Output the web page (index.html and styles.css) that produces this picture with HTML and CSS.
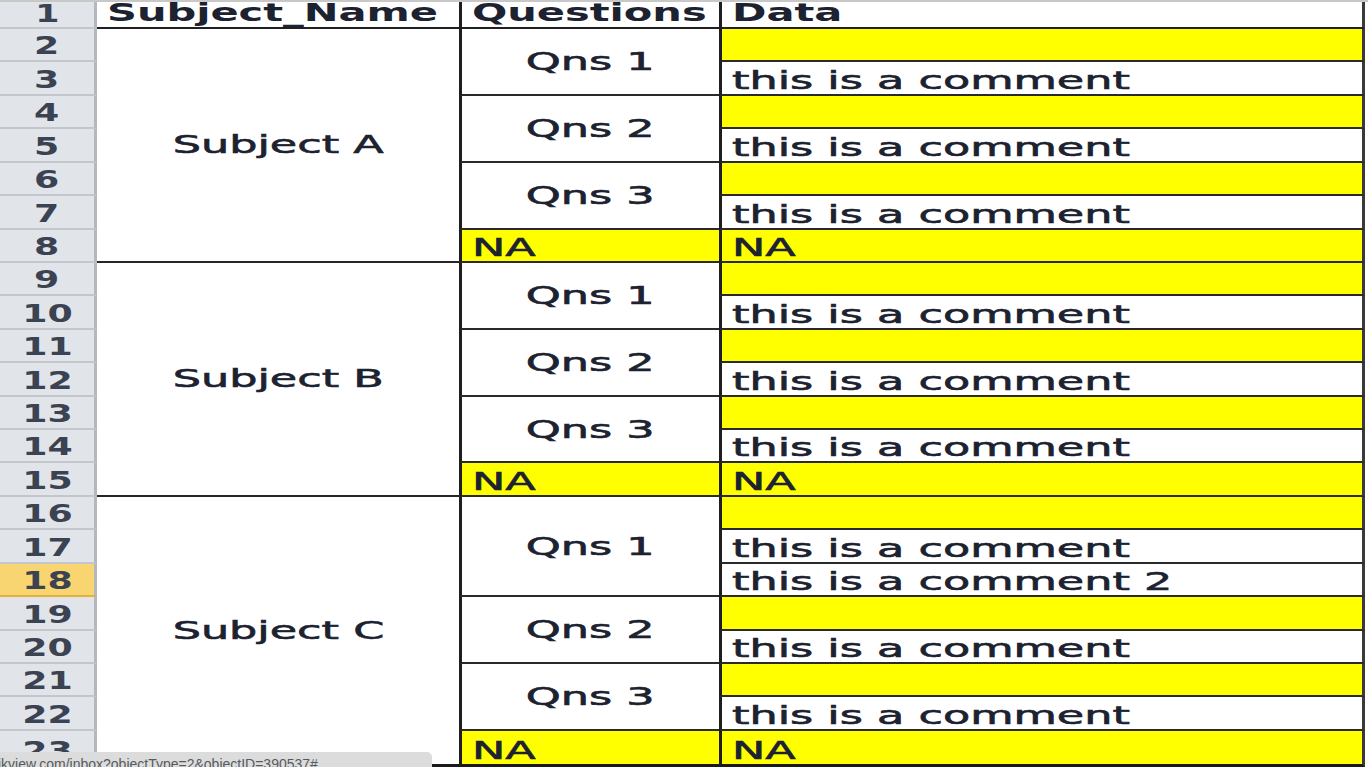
FILE: index.html
```html
<!DOCTYPE html>
<html>
<head>
<meta charset="utf-8">
<link rel="stylesheet" href="styles.css">
</head>
<body>
<div class="sheet">
  <div class="rh"><span class="n">1</span></div>
  <div class="hd c2"><span class="t">Subject_Name</span></div>
  <div class="hd c3 ql"><span class="t">Questions</span></div>
  <div class="hd c4 dl"><span class="t">Data</span></div>

  <div class="rh"><span class="n">2</span></div>
  <div class="subj s7"><span class="t">Subject A</span></div>
  <div class="q s2"><span class="t">Qns 1</span></div>
  <div class="d y"></div>
  <div class="rh"><span class="n">3</span></div>
  <div class="d"><span class="t">this is a comment</span></div>
  <div class="rh"><span class="n">4</span></div>
  <div class="q s2"><span class="t">Qns 2</span></div>
  <div class="d y"></div>
  <div class="rh"><span class="n">5</span></div>
  <div class="d"><span class="t">this is a comment</span></div>
  <div class="rh"><span class="n">6</span></div>
  <div class="q s2"><span class="t">Qns 3</span></div>
  <div class="d y"></div>
  <div class="rh"><span class="n">7</span></div>
  <div class="d"><span class="t">this is a comment</span></div>
  <div class="rh"><span class="n">8</span></div>
  <div class="q na"><span class="t">NA</span></div>
  <div class="d y"><span class="t">NA</span></div>

  <div class="rh"><span class="n">9</span></div>
  <div class="subj s7"><span class="t">Subject B</span></div>
  <div class="q s2"><span class="t">Qns 1</span></div>
  <div class="d y"></div>
  <div class="rh"><span class="n">10</span></div>
  <div class="d"><span class="t">this is a comment</span></div>
  <div class="rh"><span class="n">11</span></div>
  <div class="q s2"><span class="t">Qns 2</span></div>
  <div class="d y"></div>
  <div class="rh"><span class="n">12</span></div>
  <div class="d"><span class="t">this is a comment</span></div>
  <div class="rh"><span class="n">13</span></div>
  <div class="q s2"><span class="t">Qns 3</span></div>
  <div class="d y"></div>
  <div class="rh"><span class="n">14</span></div>
  <div class="d"><span class="t">this is a comment</span></div>
  <div class="rh"><span class="n">15</span></div>
  <div class="q na"><span class="t">NA</span></div>
  <div class="d y"><span class="t">NA</span></div>

  <div class="rh"><span class="n">16</span></div>
  <div class="subj s8 last"><span class="t">Subject C</span></div>
  <div class="q s3"><span class="t">Qns 1</span></div>
  <div class="d y"></div>
  <div class="rh"><span class="n">17</span></div>
  <div class="d"><span class="t">this is a comment</span></div>
  <div class="rh sel"><span class="n">18</span></div>
  <div class="d"><span class="t">this is a comment 2</span></div>
  <div class="rh"><span class="n">19</span></div>
  <div class="q s2"><span class="t">Qns 2</span></div>
  <div class="d y"></div>
  <div class="rh"><span class="n">20</span></div>
  <div class="d"><span class="t">this is a comment</span></div>
  <div class="rh"><span class="n">21</span></div>
  <div class="q s2"><span class="t">Qns 3</span></div>
  <div class="d y"></div>
  <div class="rh"><span class="n">22</span></div>
  <div class="d"><span class="t">this is a comment</span></div>
  <div class="rh"><span class="n">23</span></div>
  <div class="q na last"><span class="t">NA</span></div>
  <div class="d y last"><span class="t">NA</span></div>
</div>
<div class="status">ikview.com/inbox?objectType=2&amp;objectID=390537#</div>
</body>
</html>
```

FILE: styles.css
```css
html, body {
  margin: 0;
  padding: 0;
  background: #ffffff;
}
body {
  width: 1368px;
  height: 767px;
  overflow: hidden;
  position: relative;
  font-family: "DejaVu Sans", Verdana, sans-serif;
  color: #1c2230;
}
.sheet {
  display: grid;
  grid-template-columns: 97px 362px 260px 646px 3px;
  grid-template-rows: 27px repeat(21, 33.43px) 36px;
  border-top: 2px solid #c8c8c8;
}
.sheet > div {
  box-sizing: border-box;
  display: flex;
  min-width: 0;
}
.t {
  display: inline-block;
  font-size: 25px;
  line-height: 1;
  white-space: nowrap;
  transform: scaleX(1.78);
  transform-origin: left bottom;
  -webkit-text-stroke: 0.6px #1c2230;
}
.rh {
  grid-column: 1;
  background: #e1e4e9;
  border-right: 3px solid #b3b8bf;
  border-bottom: 2px solid #c3c7cd;
  justify-content: center;
  align-items: flex-end;
}
.rh .n {
  display: inline-block;
  font-size: 25px;
  font-weight: bold;
  line-height: 1;
  color: #3b4252;
  transform: scaleX(1.45);
  padding-bottom: 2px;
}
.rh:first-child .n {
  font-size: 24px;
  line-height: 22px;
  padding-bottom: 2px;
}
.rh.sel {
  background: #f8d570;
  border-bottom-color: #e2b23f;
}
.hd {
  align-items: flex-end;
  padding-left: 10px;
  padding-bottom: 2px;
  border-bottom: 2px solid #202020;
  position: relative;
  z-index: 1;
}
.hd .t {
  font-weight: bold;
  font-size: 24px;
  transform: scaleX(1.73);
  -webkit-text-stroke: 0;
}
.c2 { grid-column: 2; }
.c3 { grid-column: 3; }
.c4 { grid-column: 4; }
.ql {
  border-left: 3px solid #1e1e1e;
}
.dl {
  border-left: 3px solid #1e1e1e;
  border-right: 3px solid #3a3a3a;
  padding-left: 10px;
}
.subj {
  grid-column: 2;
  justify-content: center;
  align-items: center;
  border-bottom: 2px solid #262626;
}
.subj .t, .q .t {
  transform-origin: center center;
}
.subj.last { border-bottom: 3px solid #1a1a1a; }
.s2 { grid-row: span 2; }
.s3 { grid-row: span 3; }
.s7 { grid-row: span 7; }
.s8 { grid-row: span 8; }
.q {
  grid-column: 3;
  justify-content: center;
  align-items: center;
  border-left: 3px solid #1e1e1e;
  border-bottom: 2px solid #2a2a2a;
}
.q.na {
  background: #ffff00;
  justify-content: flex-start;
  align-items: flex-end;
  padding-left: 10px;
}
.q.na .t {
  transform-origin: left bottom;
  padding-bottom: 1px;
}
.d {
  grid-column: 4;
  align-items: flex-end;
  padding-left: 10px;
  border-left: 3px solid #1e1e1e;
  border-right: 3px solid #3a3a3a;
  border-bottom: 2px solid #2a2a2a;
}
.d .t { padding-bottom: 1px; }
.y { background: #ffff00; }
.last { border-bottom-width: 3px; border-bottom-color: #1a1a1a; }
.status {
  position: absolute;
  left: 0;
  bottom: 0;
  width: 432px;
  height: 15px;
  background: #dcdcdc;
  border-top-right-radius: 5px;
  font-family: "Liberation Sans", Arial, sans-serif;
  font-size: 14px;
  line-height: 24px;
  color: #555a60;
  white-space: nowrap;
  overflow: hidden;
  text-indent: -2px;
  z-index: 2;
}
```
